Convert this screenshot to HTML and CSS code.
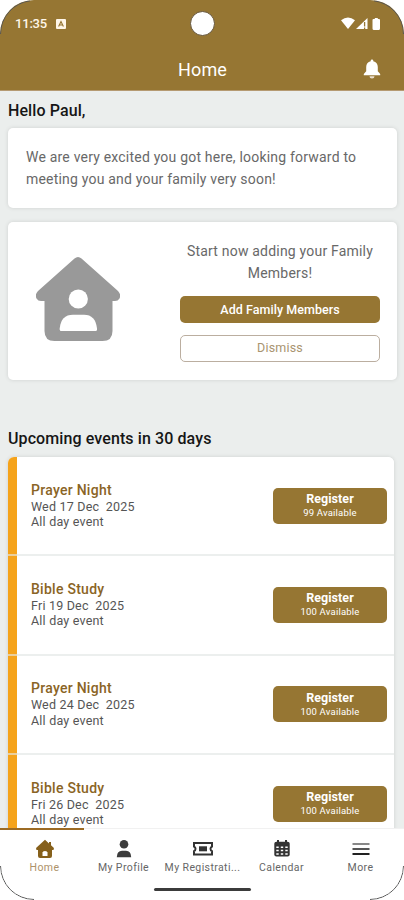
FILE: index.html
```html
<!DOCTYPE html>
<html lang="en">
<head>
<meta charset="utf-8">
<meta name="viewport" content="width=device-width, initial-scale=1">
<title>Home</title>
<link rel="stylesheet" href="styles.css">
</head>
<body>
<div class="phone">
  <header class="header">
    <div class="status">
      <span class="time">11:35</span>
      <svg class="app-icon" viewBox="0 0 10 10"><rect width="10" height="10" rx="1" fill="#fff6e8"/><path d="M2.600 7.500 5 2.500l2.400 5M3.600 6h2.800" fill="none" stroke="#967633" stroke-width="1.100"/></svg>
      <svg class="signals" viewBox="0 0 42 14"><path d="M0 3.200Q7 -2 14 3.200L7 12Z" fill="#fff"/><path d="M15 12 26.500 1V12Z" fill="#fff"/><path d="M23.600 5v4.500M23.600 10.500v1.500" stroke="#967633" stroke-width="1.300"/><path d="M33.800 1h3v1h1.200q1 0 1 1v8.500q0 1.500-1.500 1.500h-4.500q-1.500 0-1.500-1.500v-8.500q0-1 1-1h1.300z" fill="#fff"/></svg>
    </div>
    <span class="camera"></span>
    <div class="titlebar">
      <h1 class="title">Home</h1>
      <svg class="bell" viewBox="0 0 18 20"><path d="M9 .5c-.8 0-1.300.6-1.300 1.300v.5C4.800 3 3.200 5.300 3.200 8v4.300L.8 14.900v1.300h16.400v-1.300l-2.400-2.600V8c0-2.700-1.600-5-4.500-5.700v-.5C10.300 1.100 9.800.5 9 .5Z" fill="#fff"/><path d="M6.500 17.200h5a2.500 2.200 0 0 1-5 0Z" fill="#eadfce"/></svg>
    </div>
  </header>

  <main class="main">
    <h2 class="heading hello">Hello Paul,</h2>
    <section class="card welcome">We are very excited you got here, looking forward to<br>meeting you and your family very soon!</section>
    <section class="card family">
      <svg class="house" viewBox="0 0 84 84"><path d="M38.500 1.500Q42 -1.500 45.500 1.500L82 34Q85.500 38 83.500 41.500Q82 44 79 44H76.500V74Q76.500 84 66.500 84H18.500Q8.500 84 8.500 74V44H5Q2 44 .5 41.500Q-1.500 38 2 34Z" fill="#999"/><circle cx="42.300" cy="42" r="9.600" fill="#fff"/><path d="M23.700 72.500V71.500Q25 57.800 37 57.800H48Q59.500 57.800 61 71.500V72.500Q61 74 59.500 74H25.200Q23.700 74 23.700 72.500Z" fill="#fff"/></svg>
      <div class="invite">
        <p class="invite-text">Start now adding your Family<br>Members!</p>
        <button class="btn primary">Add Family Members</button>
        <button class="btn outline">Dismiss</button>
      </div>
    </section>

    <h2 class="heading upcoming">Upcoming events in 30 days</h2>
    <section class="events">
      <article class="event">
        <div class="info"><h3 class="name">Prayer Night</h3><p class="when">Wed 17 Dec&nbsp; 2025</p><p class="when">All day event</p></div>
        <button class="register"><b class="reg-label">Register</b><span class="spots">99 Available</span></button>
      </article>
      <article class="event">
        <div class="info"><h3 class="name">Bible Study</h3><p class="when">Fri 19 Dec&nbsp; 2025</p><p class="when">All day event</p></div>
        <button class="register"><b class="reg-label">Register</b><span class="spots">100 Available</span></button>
      </article>
      <article class="event">
        <div class="info"><h3 class="name">Prayer Night</h3><p class="when">Wed 24 Dec&nbsp; 2025</p><p class="when">All day event</p></div>
        <button class="register"><b class="reg-label">Register</b><span class="spots">100 Available</span></button>
      </article>
      <article class="event">
        <div class="info"><h3 class="name">Bible Study</h3><p class="when">Fri 26 Dec&nbsp; 2025</p><p class="when">All day event</p></div>
        <button class="register"><b class="reg-label">Register</b><span class="spots">100 Available</span></button>
      </article>
    </section>
  </main>

  <nav class="nav">
    <a class="tab active"><svg class="tab-icon" viewBox="0 0 20 20"><path d="M10 .8 1.300 8.800q-1 1.700.7 2.200H3v6q0 2 2 2h10q2 0 2-2v-6h1q1.700-.5.7-2.200L16 6.200V3h-2v1.400Z" fill="#86601b"/><path d="M7.500 17v-3.500q0-1.500 2.500-1.500t2.500 1.500V17Z" fill="#fff"/></svg><span class="tab-label">Home</span></a>
    <a class="tab"><svg class="tab-icon" viewBox="0 0 20 20"><circle cx="10" cy="5.200" r="4.300" fill="#3c3c3c"/><path d="M2.800 18.300q0-6.600 5.200-6.600h4q5.200 0 5.200 6.600Z" fill="#3c3c3c"/></svg><span class="tab-label">My Profile</span></a>
    <a class="tab"><svg class="tab-icon wide" viewBox="0 0 22 20"><path d="M2 4h18v3.500q-1.500.5-1.500 2.300t1.500 2.300v3.400H2v-3.400Q3.500 11.600 3.500 9.800T2 7.500Z" fill="none" stroke="#333" stroke-width="2"/><rect x="7" y="7.300" width="8" height="5" fill="#333"/></svg><span class="tab-label">My Registrati...</span></a>
    <a class="tab"><svg class="tab-icon" viewBox="0 0 20 20"><path d="M6 1v3M14 1v3" stroke="#333" stroke-width="2"/><rect x="2.300" y="2.800" width="15.400" height="14.700" rx="2" fill="#333"/><path d="M4.300 8.300h2.400M8.800 8.300h2.400M13.300 8.300h2.400M4.300 11.600h2.400M8.800 11.600h2.400M13.300 11.600h2.400M4.300 14.900h2.400M8.800 14.900h2.400M13.300 14.900h2.400" stroke="#fff" stroke-width="1.500"/></svg><span class="tab-label">Calendar</span></a>
    <a class="tab"><svg class="tab-icon" viewBox="0 0 20 20"><path d="M1.500 5h17" stroke="#888" stroke-width="2"/><path d="M1.500 10h17" stroke="#555" stroke-width="2"/><path d="M1.500 15h17" stroke="#222" stroke-width="2"/></svg><span class="tab-label">More</span></a>
    <span class="handle"></span>
  </nav>
  <svg class="outline-corners" viewBox="0 0 404 900"><path d="M.5 34A33.500 33.500 0 0 1 30 .8M374 .8A33.500 33.500 0 0 1 403.500 34M.5 866A33.500 33.500 0 0 0 34 899.500M403.500 866A33.500 33.500 0 0 1 370 899.500" fill="none" stroke="#555"/></svg>
</div>
</body>
</html>
```
FILE: styles.css
```css
* { box-sizing: border-box; margin: 0; padding: 0; }
body { background: #fff; font-family: Roboto, "Liberation Sans", sans-serif; }
button { font-family: inherit; }
.phone { width: 404px; height: 900px; overflow: hidden; position: relative; display: flex; flex-direction: column; background: #ebeeed; border-radius: 34px; }
.outline-corners { position: absolute; left: 0; top: 0; width: 404px; height: 900px; pointer-events: none; }
.header { height: 91px; flex: none; background: #967633; color: #fff; position: relative; border-bottom: 1px solid #b59a72; }
.status { height: 47px; padding: 0 24px 0 15px; display: flex; align-items: center; }
.time { width: 33px; font-size: 13px; font-weight: 500; letter-spacing: -.2px; color: #fff6e8; }
.app-icon { width: 10px; height: 10px; margin-left: 8px; }
.signals { width: 42px; height: 14px; margin-left: auto; margin-right: -3px; }
.camera { position: absolute; left: 190px; top: 11px; width: 25px; height: 25px; border-radius: 50%; background: #fff; border: 1px solid #65553a; }
.titlebar { height: 43px; display: flex; align-items: center; justify-content: center; position: relative; }
.title { font-size: 18px; font-weight: 400; letter-spacing: .1px; padding-left: 1px; padding-top: 1px; }
.bell { position: absolute; right: 23px; top: 12px; width: 18px; height: 20px; }
.main { flex: 1; min-height: 0; overflow: hidden; padding: 0 7px 0 8px; }
.heading { font-size: 16px; font-weight: 500; line-height: 20px; color: #161616; }
.hello { margin-top: 10px; letter-spacing: .1px; }
.card { background: #fff; border-radius: 5px; box-shadow: 0 0 4px rgba(0,0,0,.12); color: #686868; font-size: 14px; line-height: 22px; letter-spacing: .2px; }
.welcome { height: 80px; margin-top: 7px; padding: 18px; white-space: nowrap; }
.family { height: 158px; margin-top: 14px; padding: 18px 17px 0 28px; display: flex; justify-content: space-between; }
.house { width: 84px; height: 84px; margin-top: 17px; }
.invite { width: 200px; }
.invite-text { text-align: center; white-space: nowrap; }
.btn { display: block; width: 200px; height: 27px; border-radius: 5px; font-size: 12.500px; line-height: 25px; }
.primary { margin-top: 12px; background: #967633; color: #fff; border: 0; font-weight: 500; letter-spacing: .05px; }
.outline { margin-top: 12px; line-height: 23px; padding-bottom: 2px; background: #fff; color: #a9946f; border: 1px solid #bbaea0; letter-spacing: .2px; }
.upcoming { margin-top: 49px; letter-spacing: .1px; }
.events { width: 386px; margin-top: 8px; background: #fff; border-radius: 6px 6px 0 0; overflow: hidden; box-shadow: 0 0 4px rgba(0,0,0,.12); }
.event { height: 99.300px; padding: 0 7px 2px 23px; background: linear-gradient(90deg, #f5a31b 9px, #fff 9px); box-shadow: inset 0 -2px rgba(226,230,229,.65); display: flex; justify-content: space-between; align-items: center; }
.name { font-size: 14px; line-height: 17px; font-weight: 500; color: #8a6425; letter-spacing: .27px; }
.when { font-size: 12.500px; line-height: 15.500px; color: #555; white-space: nowrap; letter-spacing: .2px; }
.register { width: 114px; height: 36px; border: 0; border-radius: 5px; background: #967633; color: #fff; display: flex; flex-direction: column; align-items: center; justify-content: center; }
.reg-label { font-size: 12.500px; line-height: 14px; font-weight: 700; letter-spacing: .05px; }
.spots { font-size: 9.500px; line-height: 13px; letter-spacing: .2px; }
.nav { height: 72px; flex: none; display: grid; grid-template-columns: 84px 79px 79px 79px 79px; background: #fff; position: relative; box-shadow: inset 0 1px #f1f1f1; }
.tab { display: flex; flex-direction: column; align-items: center; padding-top: 9px; color: #666; border-top: 2px solid transparent; }
.tab.active { color: #ad9269; border-top-color: #9c6b24; padding-left: 5px; }
.tab-icon { width: 20px; height: 20px; }
.tab-icon.wide { width: 22px; }
.tab-label { font-size: 10.500px; line-height: 14px; margin-top: 2px; letter-spacing: .4px; white-space: nowrap; }
.handle { position: absolute; left: 154px; bottom: 9px; width: 97px; height: 3px; border-radius: 2px; background: #3b3b3b; }
```
